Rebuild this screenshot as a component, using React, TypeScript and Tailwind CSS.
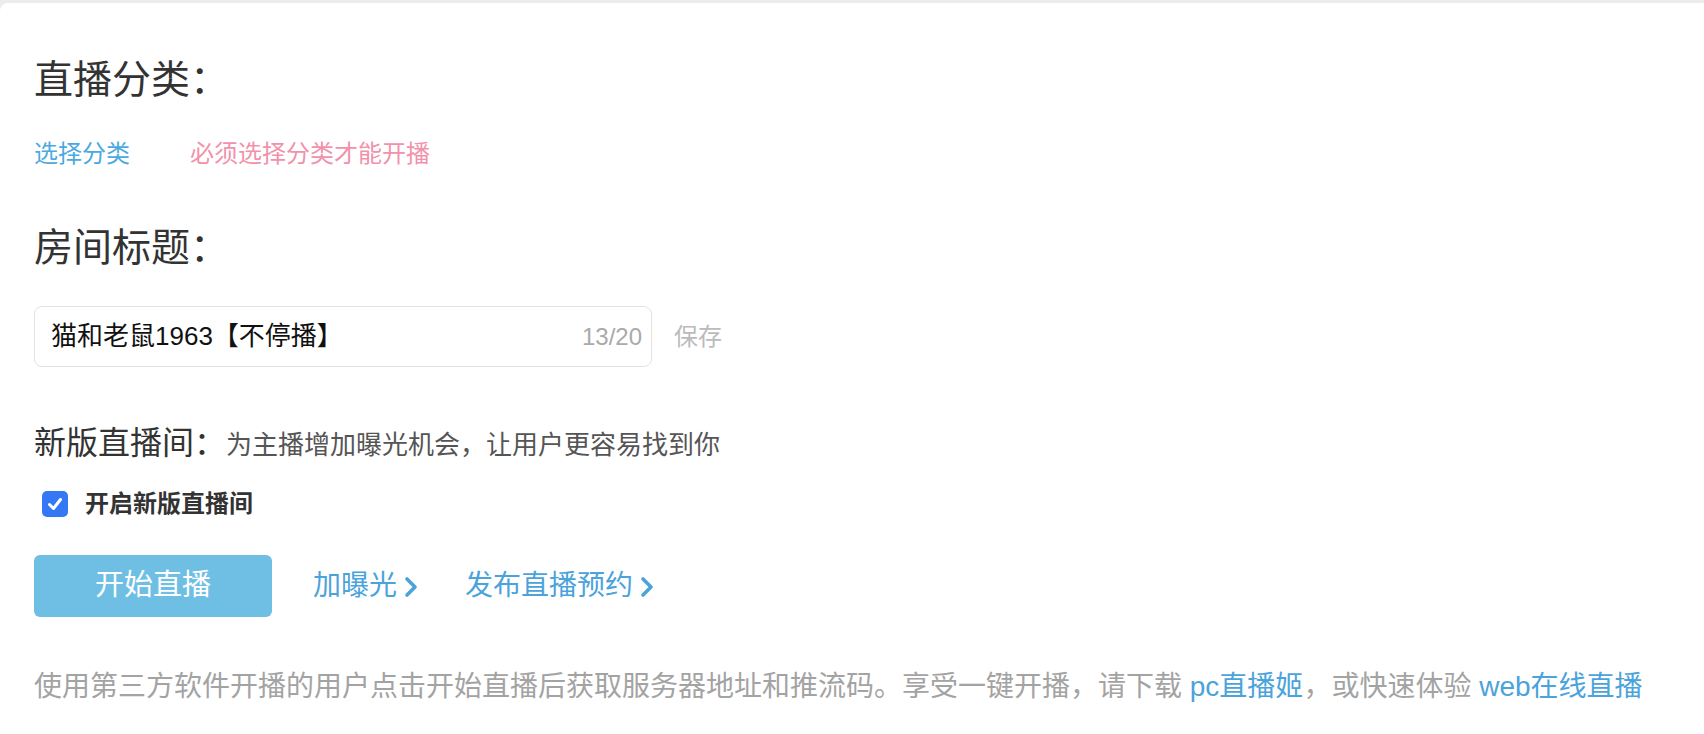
import React, { useState } from 'react';

const FONT = "font-['Liberation_Sans','Noto_Sans_CJK_SC',sans-serif]";

const Chevron: React.FC = () => (
  <svg width="14" height="22" viewBox="0 0 14 22" className="ml-[7px] mt-[2px]">
    <polyline points="3,3 11,11 3,19" fill="none" stroke="#4ba3db" strokeWidth="3.6" strokeLinecap="round" strokeLinejoin="round" />
  </svg>
);

export default function App() {
  const [title] = useState('猫和老鼠1963【不停播】');
  const [newRoom, setNewRoom] = useState(true);

  return (
    <div className={`min-h-[734px] bg-[#ececef] pt-[3px] ${FONT}`}>
      <div className="h-[731px] rounded-tl-[8px] bg-white pl-[34px] pt-[52px]">
        {/* 直播分类 */}
        <h2 className="text-[39px] leading-[50px] text-[#333]">直播分类：</h2>
        <div className="mt-[31px] flex items-center text-[24px] leading-[36px]">
          <span className="text-[#4ba9e0]">选择分类</span>
          <span className="ml-[60px] text-[#f291aa]">必须选择分类才能开播</span>
        </div>

        {/* 房间标题 */}
        <h2 className="mt-[51px] text-[39px] leading-[50px] text-[#333]">房间标题：</h2>
        <div className="mt-[33px] flex items-center">
          <div className="flex h-[61px] w-[618px] items-center justify-between rounded-[8px] border border-[#e3e3e3] pl-[16px] pr-[9px]">
            <span className="text-[26px] text-[#111]">{title}</span>
            <span className="text-[24px] text-[#aaa]">13/20</span>
          </div>
          <span className="ml-[22px] text-[24px] text-[#bbb]">保存</span>
        </div>

        {/* 新版直播间 */}
        <div className="mt-[54px] flex items-baseline leading-[44px]">
          <span className="text-[32px] text-[#333]">新版直播间：</span>
          <span className="text-[26px] text-[#555]">为主播增加曝光机会，让用户更容易找到你</span>
        </div>
        <label className="mt-[19px] flex h-[36px] items-center pl-[8px]">
          <button
            onClick={() => setNewRoom(!newRoom)}
            className={`flex h-[26px] w-[26px] items-center justify-center rounded-[5px] ${newRoom ? 'bg-[#3478f6]' : 'border border-[#999] bg-white'}`}
          >
            {newRoom && (
              <svg width="18" height="18" viewBox="0 0 18 18">
                <polyline points="3.5,9.5 7.5,13.5 14.5,4.5" fill="none" stroke="#fff" strokeWidth="3" strokeLinecap="round" strokeLinejoin="round" />
              </svg>
            )}
          </button>
          <span className="ml-[17px] text-[24px] font-bold text-[#333]">开启新版直播间</span>
        </label>

        {/* 操作 */}
        <div className="mt-[33px] flex items-center">
          <button className="h-[62px] w-[238px] rounded-[6px] bg-[#6fbfe4] text-[29px] text-white">开始直播</button>
          <a className="ml-[41px] flex items-center text-[28px] text-[#4ba3db]">
            加曝光
            <Chevron />
          </a>
          <a className="ml-[47px] flex items-center text-[28px] text-[#4ba3db]">
            发布直播预约
            <Chevron />
          </a>
        </div>

        <p className="mt-[50px] text-[28px] leading-[40px] text-[#a3a3a3]">
          使用第三方软件开播的用户点击开始直播后获取服务器地址和推流码。享受一键开播，请下载 <a className="text-[#4ba3db]">pc直播姬</a>，或快速体验 <a className="text-[#4ba3db]">web在线直播</a>
        </p>
      </div>
    </div>
  );
}
